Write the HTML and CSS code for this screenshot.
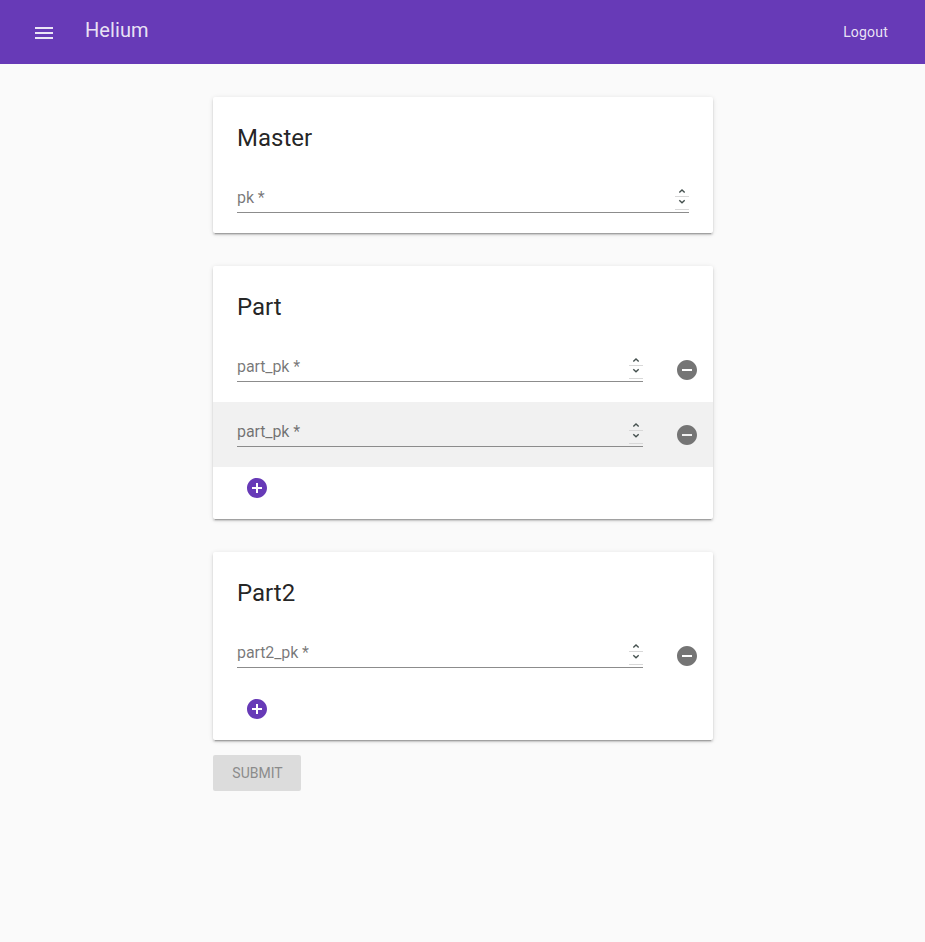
FILE: index.html
```html
<!DOCTYPE html>
<html lang="en">
<head>
<meta charset="utf-8">
<title>Helium</title>
<link rel="stylesheet" href="styles.css">
</head>
<body>
<svg class="defs" width="0" height="0" aria-hidden="true">
  <symbol id="minus" viewBox="0 0 24 24"><path d="M12 2C6.48 2 2 6.48 2 12s4.48 10 10 10 10-4.48 10-10S17.52 2 12 2zm5 11H7v-2h10v2z"/></symbol>
  <symbol id="plus" viewBox="0 0 24 24"><path d="M12 2C6.48 2 2 6.48 2 12s4.48 10 10 10 10-4.48 10-10S17.52 2 12 2zm5 11h-4v4h-2v-4H7v-2h4V7h2v4h4v2z"/></symbol>
  <symbol id="spin" viewBox="0 0 14 23"><path class="arrow" d="M4.300 5.500 7 2.900l2.700 2.600M4.300 13.200 7 15.800l2.700-2.600"/><path class="rule" d="M0 9.500h14M0 22.500h14"/></symbol>
</svg>
<header class="toolbar">
  <svg class="menu" viewBox="0 0 24 24"><path d="M3 18h18v-2H3v2zm0-5h18v-2H3v2zm0-7v2h18V6H3z"/></svg>
  <h1 class="brand">Helium</h1>
  <a class="logout">Logout</a>
</header>
<main class="form">
  <section class="card">
    <h2 class="title">Master</h2>
    <div class="row single"><div class="field"><label>pk *</label><svg class="spin"><use href="#spin"/></svg></div></div>
  </section>
  <section class="card">
    <h2 class="title">Part</h2>
    <div class="row"><div class="field"><label>part_pk *</label><svg class="spin"><use href="#spin"/></svg></div><svg class="icon remove"><use href="#minus"/></svg></div>
    <div class="row shaded"><div class="field"><label>part_pk *</label><svg class="spin"><use href="#spin"/></svg></div><svg class="icon remove"><use href="#minus"/></svg></div>
    <div class="actions"><svg class="icon add"><use href="#plus"/></svg></div>
  </section>
  <section class="card">
    <h2 class="title">Part2</h2>
    <div class="row"><div class="field"><label>part2_pk *</label><svg class="spin"><use href="#spin"/></svg></div><svg class="icon remove"><use href="#minus"/></svg></div>
    <div class="actions"><svg class="icon add"><use href="#plus"/></svg></div>
  </section>
  <button class="submit" disabled>SUBMIT</button>
</main>
</body>
</html>
```
FILE: styles.css
```css
* { box-sizing: border-box; }
body { margin: 0; background: #fafafa; color: rgba(0,0,0,.87); font-family: Roboto, sans-serif; }
.defs { display: block; height: 0; }
.toolbar { height: 64px; padding: 0 37px 0 32px; display: flex; align-items: center; background: #673ab7; color: rgba(255,255,255,.87); }
.menu { width: 24px; height: 24px; fill: currentColor; margin-top: 2px; }
.brand { margin: -4px 0 0 29px; font-size: 20px; line-height: 24px; font-weight: 400; letter-spacing: .1px; }
.logout { margin-left: auto; font-size: 14px; letter-spacing: .2px; }
.form { width: 500px; margin: 33px 0 0 213px; }
.card { margin-bottom: 33px; padding-top: 25px; background: #fff; border-radius: 2px; box-shadow: 0 3px 1px -2px rgba(0,0,0,.2), 0 2px 2px 0 rgba(0,0,0,.14), 0 1px 5px 0 rgba(0,0,0,.12); overflow: hidden; }
.card:last-of-type { margin-bottom: 15px; }
.title { margin: 0 0 7px; padding: 0 24px; font-size: 24px; line-height: 32px; font-weight: 400; height: 39px; }
.row { height: 65px; display: flex; padding: 0 14px 0 24px; }
.row.single { padding-right: 24px; }
.row.single .field { width: 452px; }
.shaded { background: #f1f1f1; }
.field { width: 406px; height: 45px; padding-top: 18px; display: flex; justify-content: space-between; border-bottom: 1px solid #8c8c8c; font-size: 16px; line-height: 24px; letter-spacing: -.1px; color: rgba(0,0,0,.54); }
.spin { width: 14px; height: 23px; margin-top: 1px; fill: none; }
.arrow { stroke: #465250; stroke-width: 1.4; }
.rule { stroke: #d8d8d8; }
.icon { width: 24px; height: 24px; }
.remove { margin: 21px 0 0 auto; fill: #757575; }
.actions { height: 52px; padding: 9px 0 0 32px; }
.add { fill: #673ab7; }
.submit { display: block; width: 88px; height: 36px; border: 0; border-radius: 2px; background: #dcdcdc; color: #8b8b8b; font: 400 14px/36px Roboto, sans-serif; padding: 0 0 0 1px; }
```
